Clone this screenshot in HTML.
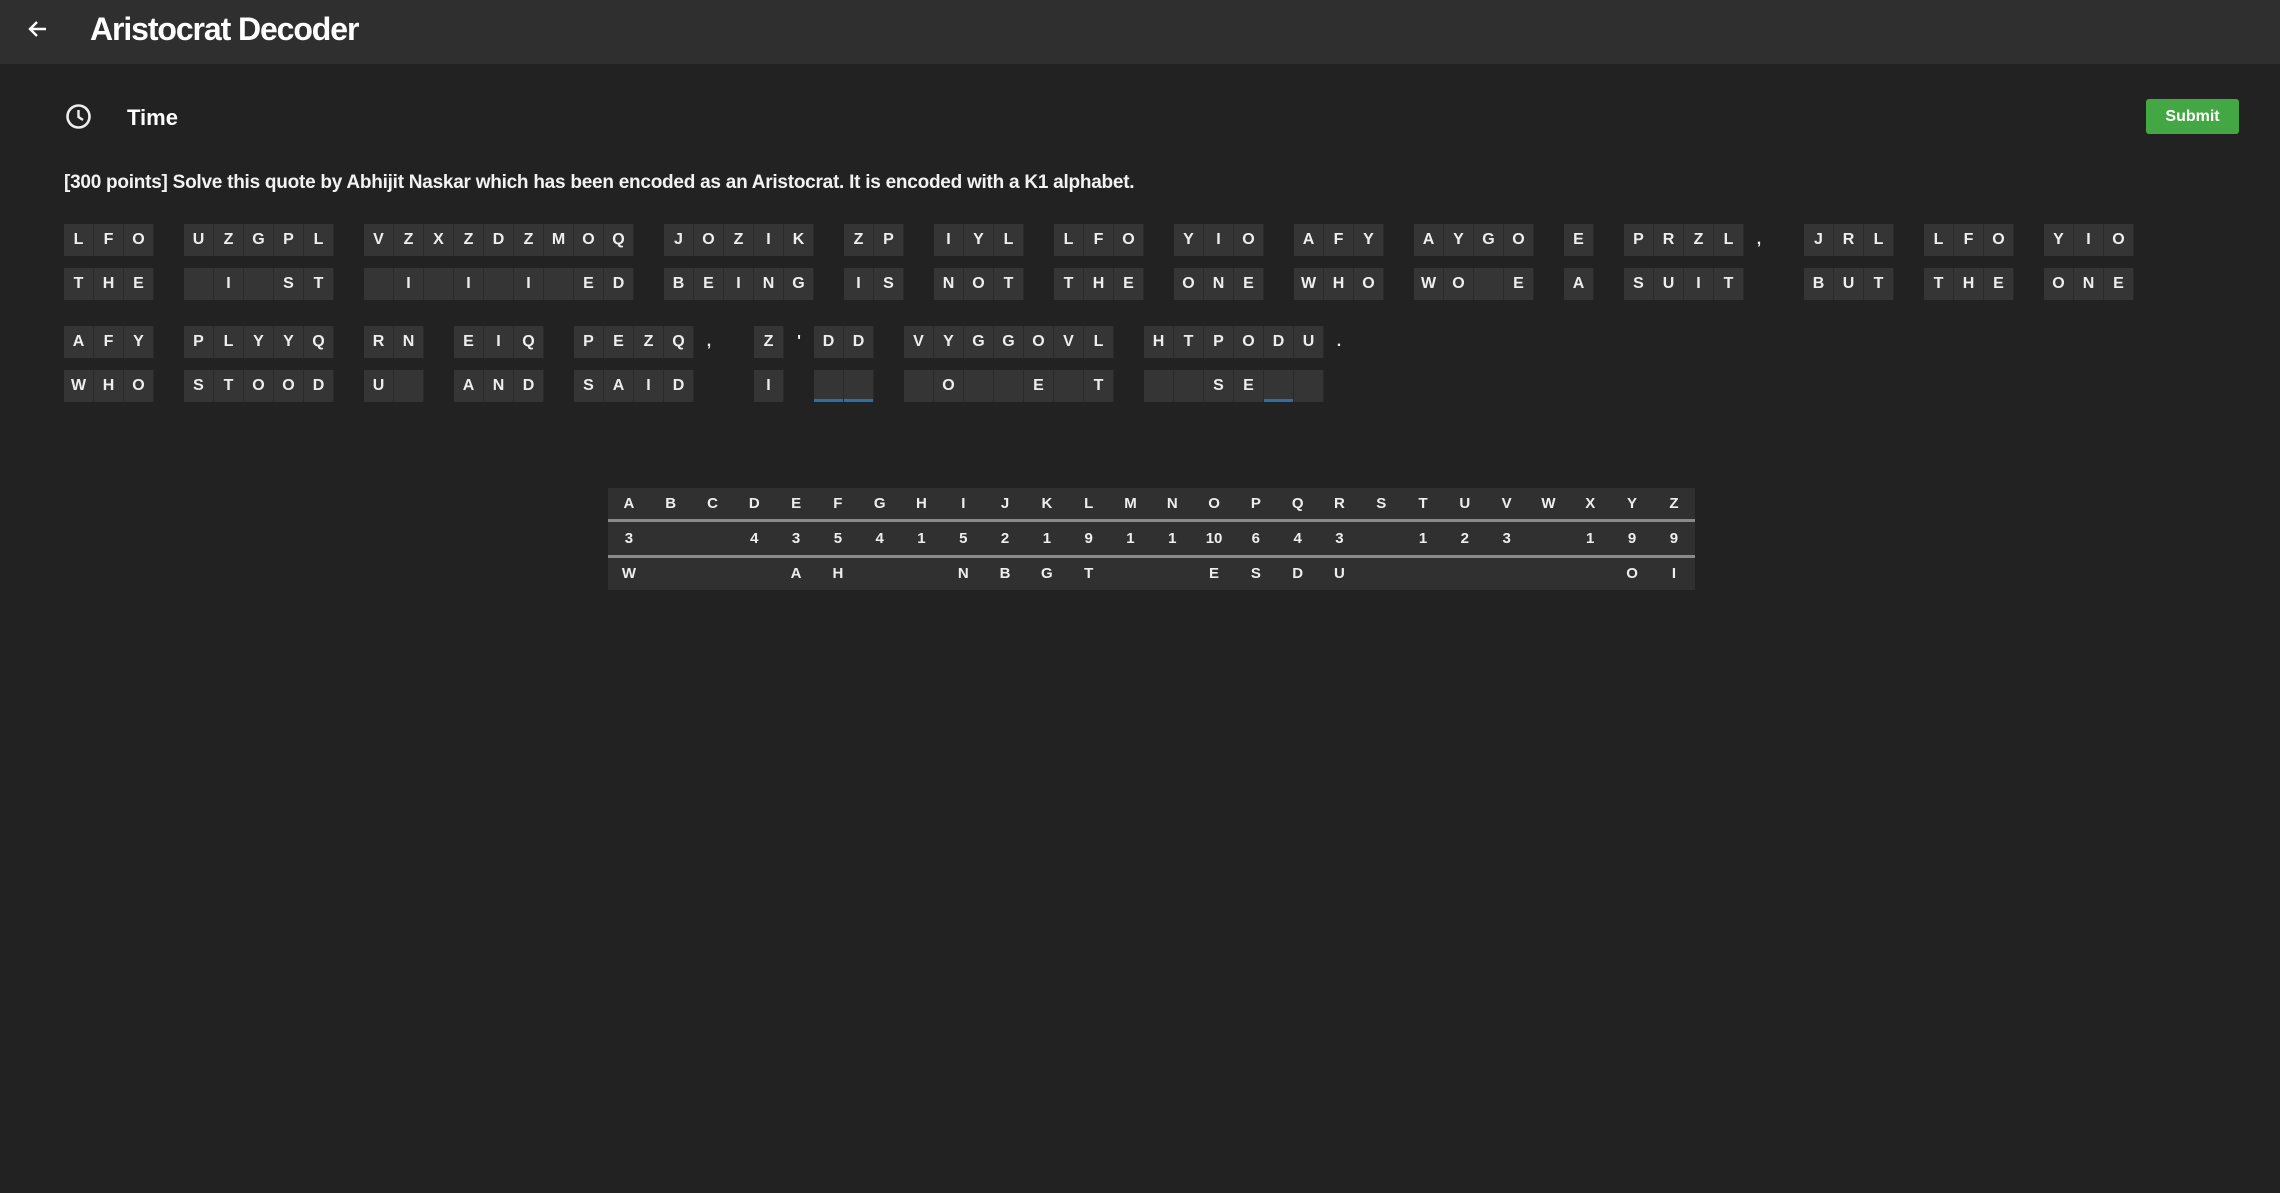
<!DOCTYPE html>
<html><head><meta charset="utf-8"><style>
*{margin:0;padding:0;box-sizing:border-box}
body{width:2280px;height:1193px;background:#222;font-family:"Liberation Sans",sans-serif;color:#fff;position:relative;overflow:hidden}
.hdr{position:absolute;left:0;top:0;width:2280px;height:64px;background:#2f2f2f}
.hdr h1{position:absolute;left:90px;top:11px;font-size:32px;font-weight:bold;letter-spacing:-1.1px}
.arrow{position:absolute;left:26px;top:17px}
.clock{position:absolute;left:65px;top:103px}
.time{position:absolute;left:127px;top:105px;font-size:22px;font-weight:bold}
.submit{position:absolute;left:2146px;top:99px;width:93px;height:35px;background:#43a843;border-radius:3px;font-size:16px;font-weight:bold;text-align:center;line-height:35px}
.ins{position:absolute;left:64px;top:172px;font-size:19px;font-weight:bold;letter-spacing:-0.25px;white-space:nowrap;color:#f2f2f2}
.line{position:absolute;left:64px;display:flex}
.w{display:flex;margin-right:30px}
.w i{display:flex;flex-direction:column;width:30px;font-style:normal}
.w b{display:block;height:32px;line-height:32px;text-align:center;background:#353535;border-right:1px solid #2a2a2a;font-size:16px;font-weight:bold;color:#eee}
.w b+b{margin-top:12px}
.w i.p b{background:transparent;border:none}
table{position:absolute;left:608px;top:488px;width:1087px;border-collapse:collapse;background:#303030}
td{width:41.8px;text-align:center;font-size:15px;font-weight:bold;color:#eee;height:34px}
tr.r1 td{height:32px;border-bottom:3px solid #8a8a8a}
tr.r2 td{height:36px;border-bottom:3px solid #8a8a8a}
</style></head><body>
<div class="hdr">
<svg class="arrow" width="24" height="24" viewBox="0 0 24 24"><path d="M20 12H5M11 5l-7 7 7 7" stroke="#fff" stroke-width="2.4" fill="none"/></svg>
<h1>Aristocrat Decoder</h1>
</div>
<svg class="clock" width="27" height="27" viewBox="0 0 27 27"><circle cx="13.5" cy="13.5" r="11" stroke="#eee" stroke-width="2.6" fill="none"/><path d="M13.5 7v7l4.5 3" stroke="#eee" stroke-width="2.4" fill="none"/></svg>
<div class="time">Time</div>
<div class="submit">Submit</div>
<div class="ins">[300 points] Solve this quote by Abhijit Naskar which has been encoded as an Aristocrat. It is encoded with a K1 alphabet.</div>

<div class="line" style="top:224px">
<div class="w"><i><b>L</b><b>T</b></i><i><b>F</b><b>H</b></i><i><b>O</b><b>E</b></i></div>
<div class="w"><i><b>U</b><b></b></i><i><b>Z</b><b>I</b></i><i><b>G</b><b></b></i><i><b>P</b><b>S</b></i><i><b>L</b><b>T</b></i></div>
<div class="w"><i><b>V</b><b></b></i><i><b>Z</b><b>I</b></i><i><b>X</b><b></b></i><i><b>Z</b><b>I</b></i><i><b>D</b><b></b></i><i><b>Z</b><b>I</b></i><i><b>M</b><b></b></i><i><b>O</b><b>E</b></i><i><b>Q</b><b>D</b></i></div>
<div class="w"><i><b>J</b><b>B</b></i><i><b>O</b><b>E</b></i><i><b>Z</b><b>I</b></i><i><b>I</b><b>N</b></i><i><b>K</b><b>G</b></i></div>
<div class="w"><i><b>Z</b><b>I</b></i><i><b>P</b><b>S</b></i></div>
<div class="w"><i><b>I</b><b>N</b></i><i><b>Y</b><b>O</b></i><i><b>L</b><b>T</b></i></div>
<div class="w"><i><b>L</b><b>T</b></i><i><b>F</b><b>H</b></i><i><b>O</b><b>E</b></i></div>
<div class="w"><i><b>Y</b><b>O</b></i><i><b>I</b><b>N</b></i><i><b>O</b><b>E</b></i></div>
<div class="w"><i><b>A</b><b>W</b></i><i><b>F</b><b>H</b></i><i><b>Y</b><b>O</b></i></div>
<div class="w"><i><b>A</b><b>W</b></i><i><b>Y</b><b>O</b></i><i><b>G</b><b></b></i><i><b>O</b><b>E</b></i></div>
<div class="w"><i><b>E</b><b>A</b></i></div>
<div class="w"><i><b>P</b><b>S</b></i><i><b>R</b><b>U</b></i><i><b>Z</b><b>I</b></i><i><b>L</b><b>T</b></i><i class="p"><b>,</b><b></b></i></div>
<div class="w"><i><b>J</b><b>B</b></i><i><b>R</b><b>U</b></i><i><b>L</b><b>T</b></i></div>
<div class="w"><i><b>L</b><b>T</b></i><i><b>F</b><b>H</b></i><i><b>O</b><b>E</b></i></div>
<div class="w"><i><b>Y</b><b>O</b></i><i><b>I</b><b>N</b></i><i><b>O</b><b>E</b></i></div>
</div>

<div class="line" style="top:326px">
<div class="w"><i><b>A</b><b>W</b></i><i><b>F</b><b>H</b></i><i><b>Y</b><b>O</b></i></div>
<div class="w"><i><b>P</b><b>S</b></i><i><b>L</b><b>T</b></i><i><b>Y</b><b>O</b></i><i><b>Y</b><b>O</b></i><i><b>Q</b><b>D</b></i></div>
<div class="w"><i><b>R</b><b>U</b></i><i><b>N</b><b></b></i></div>
<div class="w"><i><b>E</b><b>A</b></i><i><b>I</b><b>N</b></i><i><b>Q</b><b>D</b></i></div>
<div class="w"><i><b>P</b><b>S</b></i><i><b>E</b><b>A</b></i><i><b>Z</b><b>I</b></i><i><b>Q</b><b>D</b></i><i class="p"><b>,</b><b></b></i></div>
<div class="w"><i><b>Z</b><b>I</b></i><i class="p"><b>'</b><b></b></i><i><b>D</b><b style="box-shadow:inset 0 -3px #2d6ea8"></b></i><i><b>D</b><b style="box-shadow:inset 0 -3px #2d6ea8"></b></i></div>
<div class="w"><i><b>V</b><b></b></i><i><b>Y</b><b>O</b></i><i><b>G</b><b></b></i><i><b>G</b><b></b></i><i><b>O</b><b>E</b></i><i><b>V</b><b></b></i><i><b>L</b><b>T</b></i></div>
<div class="w"><i><b>H</b><b></b></i><i><b>T</b><b></b></i><i><b>P</b><b>S</b></i><i><b>O</b><b>E</b></i><i><b>D</b><b style="box-shadow:inset 0 -3px #2d6ea8"></b></i><i><b>U</b><b></b></i><i class="p"><b>.</b><b></b></i></div>
</div>

<table>
<tr class="r1"><td>A</td><td>B</td><td>C</td><td>D</td><td>E</td><td>F</td><td>G</td><td>H</td><td>I</td><td>J</td><td>K</td><td>L</td><td>M</td><td>N</td><td>O</td><td>P</td><td>Q</td><td>R</td><td>S</td><td>T</td><td>U</td><td>V</td><td>W</td><td>X</td><td>Y</td><td>Z</td></tr>
<tr class="r2"><td>3</td><td></td><td></td><td>4</td><td>3</td><td>5</td><td>4</td><td>1</td><td>5</td><td>2</td><td>1</td><td>9</td><td>1</td><td>1</td><td>10</td><td>6</td><td>4</td><td>3</td><td></td><td>1</td><td>2</td><td>3</td><td></td><td>1</td><td>9</td><td>9</td></tr>
<tr><td>W</td><td></td><td></td><td></td><td>A</td><td>H</td><td></td><td></td><td>N</td><td>B</td><td>G</td><td>T</td><td></td><td></td><td>E</td><td>S</td><td>D</td><td>U</td><td></td><td></td><td></td><td></td><td></td><td></td><td>O</td><td>I</td></tr>
</table>
</body></html>
